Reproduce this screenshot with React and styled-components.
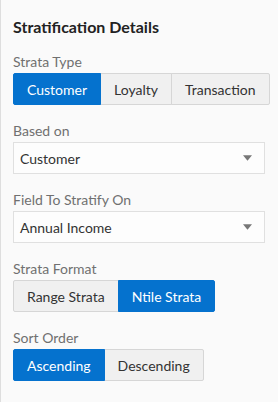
import React, { useState } from 'react';
import styled, { createGlobalStyle } from 'styled-components';

const GlobalStyle = createGlobalStyle`
  html, body {
    margin: 0;
    padding: 0;
    background: #fafafa;
  }
  body {
    font-family: Lato, "Open Sans", "Liberation Sans", sans-serif;
  }
`;

const Select = ({ value }) => (
  <SelectBox>
    <SelectValue>{value}</SelectValue>
    <Arrow viewBox="0 0 10 6">
      <path d="M0 0 L10 0 L5 6 Z" />
    </Arrow>
  </SelectBox>
);

const ButtonSet = ({ options, value, onChange }) => (
  <Group>
    {options.map((opt) => (
      <SetButton
        key={opt}
        $active={opt === value}
        onClick={() => onChange(opt)}
      >
        {opt}
      </SetButton>
    ))}
  </Group>
);

const App = () => {
  const [strataType, setStrataType] = useState('Customer');
  const [strataFormat, setStrataFormat] = useState('Ntile Strata');
  const [sortOrder, setSortOrder] = useState('Ascending');

  return (
    <>
      <GlobalStyle />
      <Panel>
        <Title>Stratification Details</Title>
        <Field>
          <Label>Strata Type</Label>
          <ButtonSet
            options={['Customer', 'Loyalty', 'Transaction']}
            value={strataType}
            onChange={setStrataType}
          />
        </Field>
        <Field>
          <Label>Based on</Label>
          <Select value="Customer" />
        </Field>
        <Field>
          <Label>Field To Stratify On</Label>
          <Select value="Annual Income" />
        </Field>
        <Field>
          <Label>Strata Format</Label>
          <ButtonSet
            options={['Range Strata', 'Ntile Strata']}
            value={strataFormat}
            onChange={setStrataFormat}
          />
        </Field>
        <Field>
          <Label>Sort Order</Label>
          <ButtonSet
            options={['Ascending', 'Descending']}
            value={sortOrder}
            onChange={setSortOrder}
          />
        </Field>
      </Panel>
    </>
  );
};

export default App;

const Panel = styled.div`
  box-sizing: border-box;
  width: 278px;
  min-height: 402px;
  border-left: 1px solid #dedede;
  padding: 16px 12px 0 12px;
  background: #fafafa;
`;

const Title = styled.div`
  font-size: 16px;
  font-weight: 700;
  line-height: 22px;
  color: #222;
  margin-bottom: 15px;
`;

const Field = styled.div`
  display: flex;
  flex-direction: column;
  align-items: flex-start;
  margin-bottom: 17px;
`;

const Label = styled.div`
  font-size: 14px;
  line-height: 18px;
  color: #707070;
  margin-bottom: 2px;
`;

const Group = styled.div`
  display: flex;
`;

const SetButton = styled.button`
  font-family: inherit;
  font-size: 14px;
  height: 32px;
  padding: 0 13px;
  margin: 0;
  margin-left: -1px;
  cursor: pointer;
  border: 1px solid ${({ $active }) => ($active ? '#0572ce' : '#d6d6d6')};
  background: ${({ $active }) => ($active ? '#0572ce' : '#f0f0f0')};
  color: ${({ $active }) => ($active ? '#fff' : '#333')};
  position: relative;
  z-index: ${({ $active }) => ($active ? 1 : 0)};

  &:first-child {
    margin-left: 0;
    border-radius: 2px 0 0 2px;
  }
  &:last-child {
    border-radius: 0 2px 2px 0;
  }
`;

const SelectBox = styled.div`
  box-sizing: border-box;
  width: 252px;
  height: 32px;
  display: flex;
  align-items: center;
  justify-content: space-between;
  padding: 0 12px 0 6px;
  border: 1px solid #e0e0e0;
  background: #fdfdfd;
`;

const SelectValue = styled.span`
  font-size: 14px;
  color: #333;
`;

const Arrow = styled.svg`
  width: 9px;
  height: 6px;
  fill: #777;
`;
